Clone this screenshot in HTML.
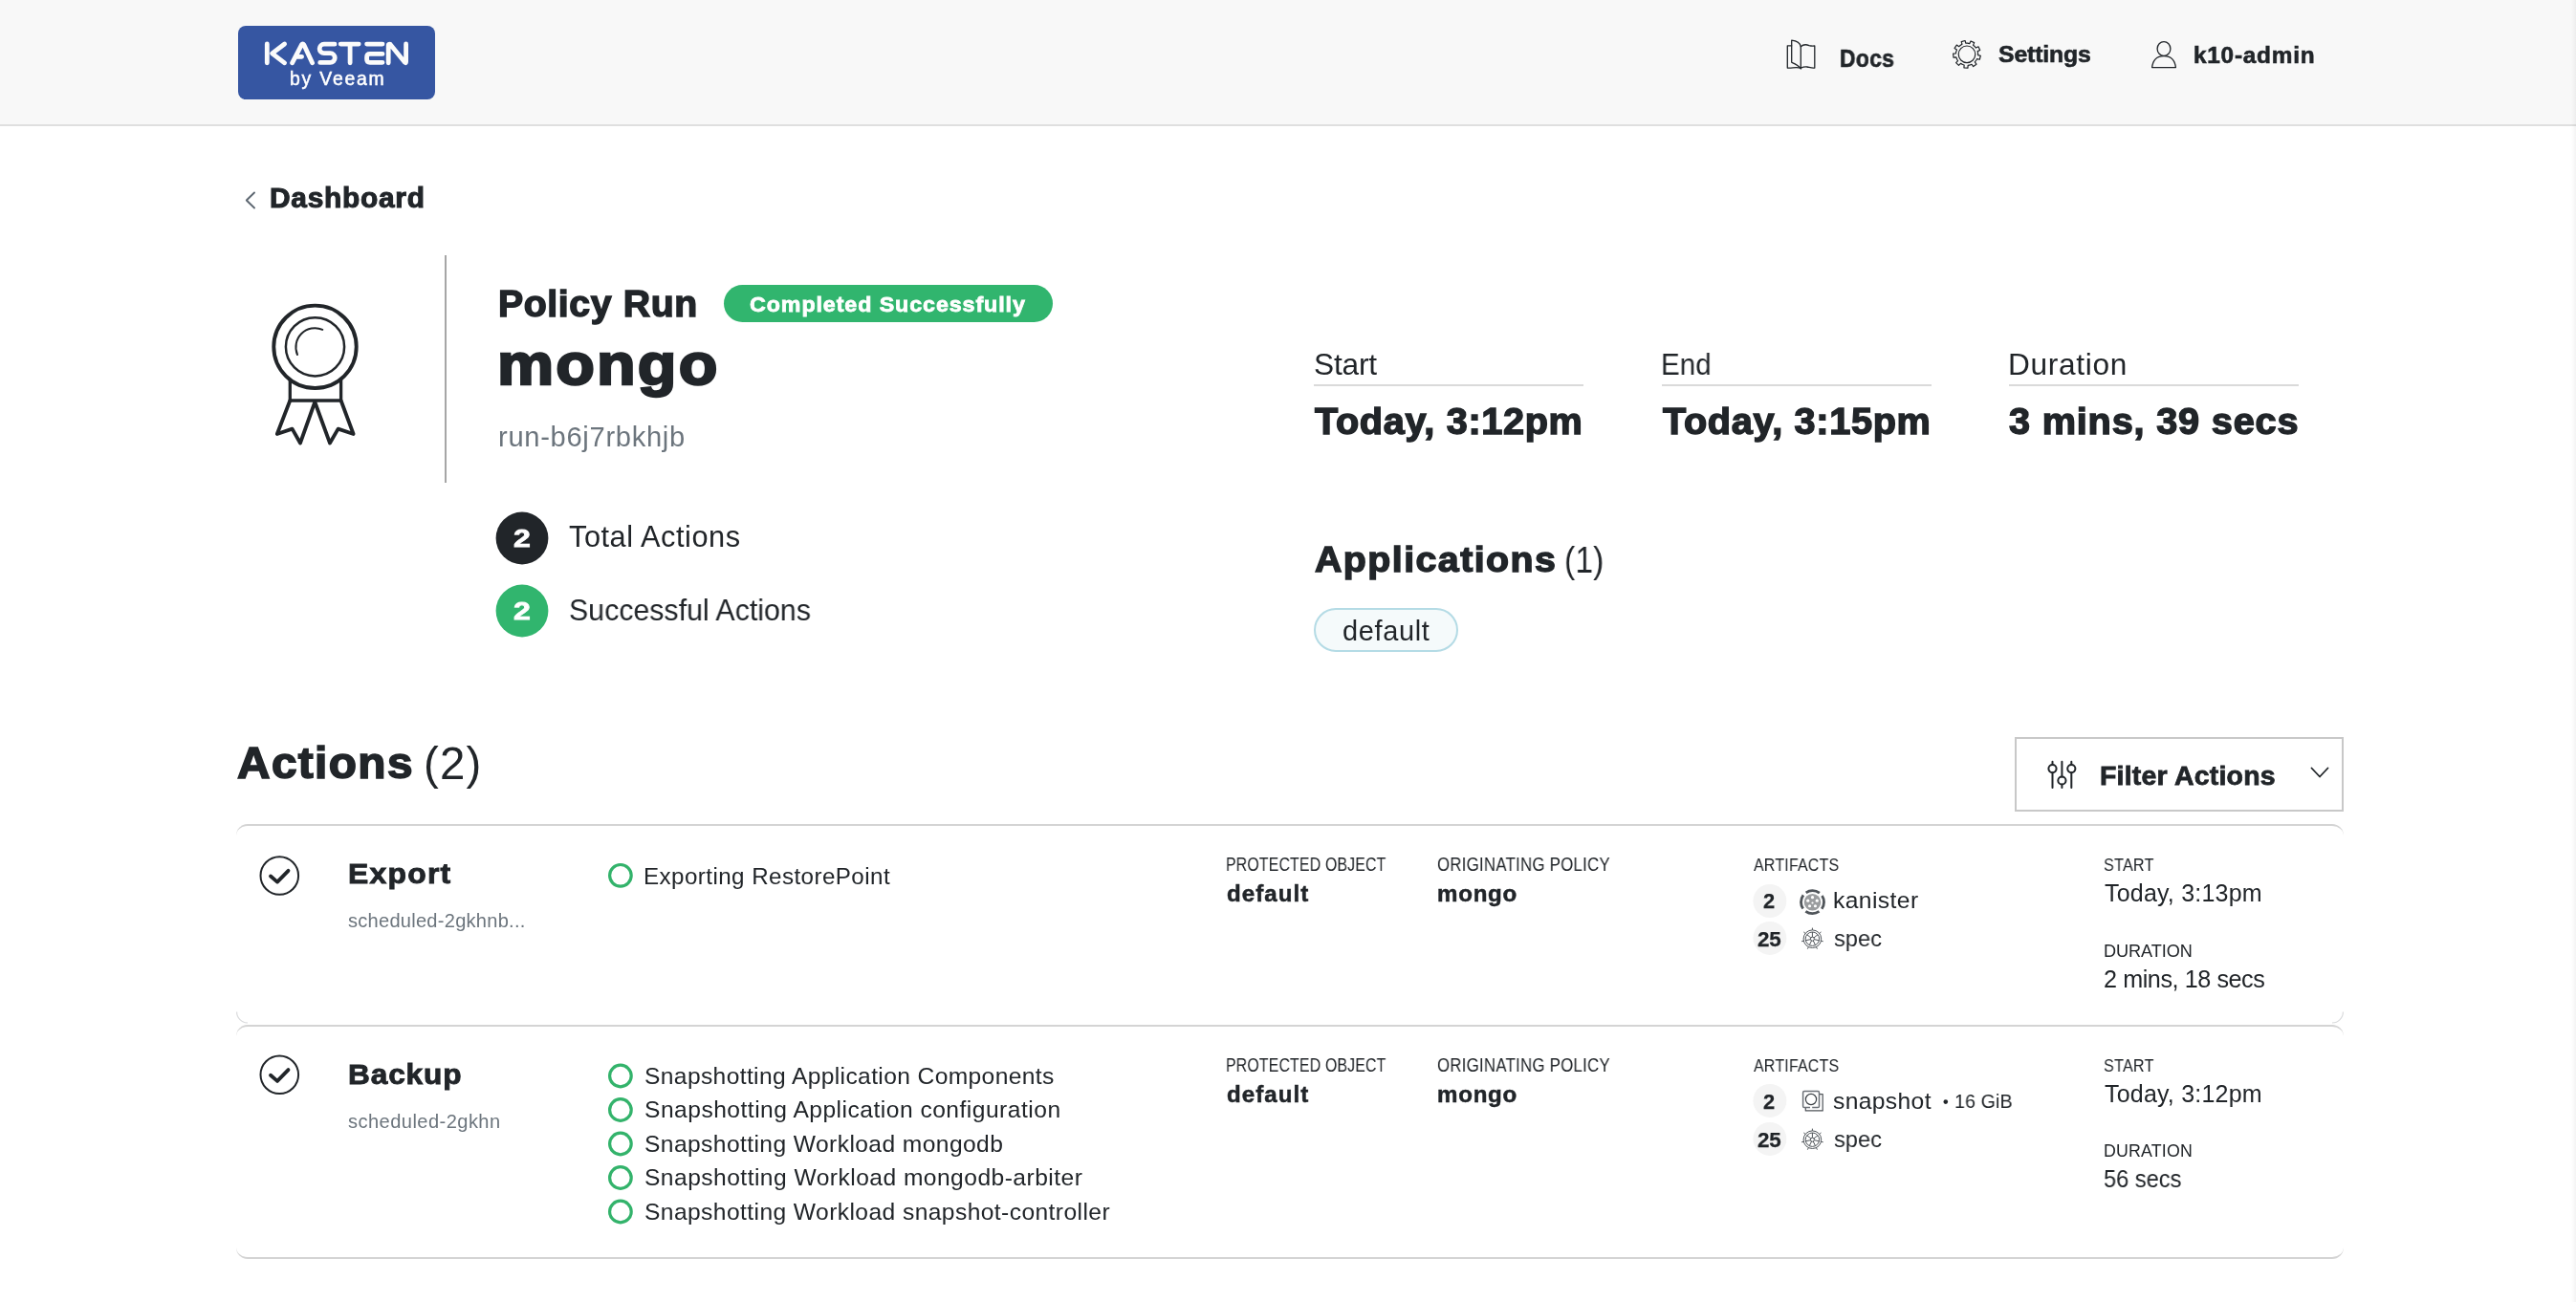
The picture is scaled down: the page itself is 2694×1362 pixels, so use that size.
<!DOCTYPE html>
<html><head><meta charset="utf-8"><title>Policy Run - mongo</title>
<style>
html,body{margin:0;padding:0;background:#fff;}
body{width:2694px;height:1362px;position:relative;overflow:hidden;font-family:"Liberation Sans",sans-serif;color:#212529;}
.t{position:absolute;white-space:nowrap;will-change:transform;}
#hdr{position:absolute;left:0;top:0;width:2694px;height:130px;background:#f8f8f8;border-bottom:2px solid #dfdfdf;}
#logo{position:absolute;left:249px;top:27px;width:206px;height:77px;background:#3656a2;border-radius:8px;}
.card{position:absolute;left:247px;width:2204px;border-top:2px solid #d4d4d4;border-radius:12px;box-sizing:border-box;}
#card1{top:862px;height:212px;}
#card2{top:1072px;height:245px;border-bottom:2px solid #d4d4d4;}
svg#ov{position:absolute;left:0;top:0;}
</style></head>
<body>
<div id="hdr"></div>
<div id="redge" style="position:absolute;right:0;top:0;width:5px;height:1362px;background:linear-gradient(to right,rgba(0,0,0,0),rgba(0,0,0,0.045));"></div>
<div id="logo"></div>
<div class="card" id="card1"></div>
<div class="card" id="card2"></div>
<svg id="ov" width="2694" height="1362" viewBox="0 0 2694 1362">
 <g id="kasten" fill="none" stroke="#fbfbfb" stroke-width="4.8" stroke-linecap="round" stroke-linejoin="round">
  <path d="M279.3 46 V65.8 M297.6 46 L284.6 55.8 L297.6 65.8"/>
  <path d="M305.6 65.8 L315.4 46.8 Q316.6 44.9 317.8 46.8 L326.6 65.8 M309.6 59.3 H315.6"/>
  <path d="M350 46.2 H338.9 A4.75 4.75 0 0 0 338.9 55.7 H345.4 A4.85 4.85 0 0 1 345.4 65.4 H334.7"/>
  <path d="M356.2 46.1 H375.2 M366.1 46.1 V65.8"/>
  <path d="M400 46.1 H383.6 M400 56.4 H386.9 Q383.6 56.4 383.6 59.7 V62 Q383.6 65.3 386.9 65.3 H400"/>
  <path d="M406.2 65.8 V47.6 Q406.2 45.8 408.2 46.4 L423.6 65.4 Q424.6 66.4 424.6 64.6 V46"/>
 </g>
 <!-- header icons -->
 <g fill="none" stroke="#212529" stroke-width="1.3" stroke-linejoin="round" stroke-linecap="round">
  <!-- book -->
  <path d="M1873.7 47.8 H1869.3 V71 C1874 71.6 1878 69.6 1883.3 71.2"/>
  <path d="M1873.7 42.2 C1878 42.6 1882.5 44.8 1883.3 48.8 V72 C1881 68 1877 66.5 1873.7 65.2 Z"/>
  <path d="M1883.3 48.8 C1886 46.2 1889 46.4 1892 47.6 C1894 48.2 1896 48.2 1897.8 48 V71 C1895 71.4 1893 70.6 1890 70 C1887 69.6 1885 70.4 1883.3 71.2"/>
  <!-- user -->
  <ellipse cx="2263" cy="51" rx="6.9" ry="7.4"/>
  <path d="M2250.6 70.6 C2251.5 62.5 2256.5 58.6 2263 58.6 C2269.5 58.6 2274.5 62.5 2275.4 70.6 Z"/>
 </g>
 <g id="gear" fill="none" stroke="#212529" stroke-width="1.2"><path d="M2049.91 47.62 L2051.97 46.35 L2051.21 43.61 L2055.07 42.53 L2055.85 45.26 L2057.47 45.21 L2059.87 45.56 L2061.04 42.98 L2064.69 44.63 L2063.54 47.22 L2064.81 48.22 L2066.42 50.03 L2068.98 48.81 L2070.72 52.42 L2068.17 53.66 L2068.50 55.25 L2068.57 57.67 L2071.31 58.38 L2070.32 62.26 L2067.57 61.57 L2066.81 63.00 L2065.30 64.90 L2066.95 67.21 L2063.69 69.55 L2062.03 67.25 L2060.53 67.85 L2058.15 68.34 L2057.93 71.17 L2053.93 70.87 L2054.13 68.04 L2052.60 67.53 L2050.46 66.38 L2048.48 68.41 L2045.61 65.61 L2047.58 63.57 L2046.73 62.19 L2045.83 59.94 L2043.01 60.21 L2042.61 56.22 L2045.43 55.93 L2045.67 54.33 L2046.43 52.03 L2044.09 50.42 L2046.35 47.11 L2048.70 48.70 Z" stroke-linejoin="round"/><circle cx="2057" cy="56.8" r="8.8"/></g>
 <!-- breadcrumb chevron -->
 <polyline points="266,201.5 257.8,209.5 266,217.5" fill="none" stroke="#5c6670" stroke-width="1.9" stroke-linecap="round" stroke-linejoin="round"/>
 <!-- award -->
 <g fill="none" stroke="#212529" stroke-linejoin="round" stroke-linecap="round">
  <circle cx="329.5" cy="362.8" r="43.2" stroke-width="3.9"/>
  <circle cx="329.5" cy="362.8" r="30.6" stroke-width="2.5"/>
  <path d="M337.3 344.8 A20 20 0 0 0 311 371" stroke-width="2"/>
  <path d="M303.3 397.5 V419 H356.6 V397.5" stroke-width="3.3"/>
  <path d="M303.3 419 L289.8 454 L305.6 448.6 L314 463.5 L329.3 420.5 L345 463.5 L353.6 448.6 L369.6 454 L356.6 419" stroke-width="3.8"/>
 </g>
 <line x1="466" y1="267" x2="466" y2="505" stroke="#a6a6a6" stroke-width="2"/>
 <!-- badge -->
 <rect x="757" y="298" width="344" height="39" rx="19.5" fill="#31b56e"/>
 <!-- counters -->
 <circle cx="546" cy="563" r="27.4" fill="#212529"/>
 <circle cx="546" cy="639" r="27.4" fill="#31b56e"/>
 <!-- time underlines -->
 <rect x="1374" y="402" width="282" height="2" fill="#dadada"/>
 <rect x="1738" y="402" width="282" height="2" fill="#dadada"/>
 <rect x="2101" y="402" width="303" height="2" fill="#dadada"/>
 <!-- pill -->
 <rect x="1375" y="637" width="149" height="44" rx="22" fill="#f5fafb" stroke="#b4dbe5" stroke-width="2"/>
 <!-- filter button -->
 <rect x="2108" y="772" width="342" height="76" fill="#fff" stroke="#c8c8c8" stroke-width="2"/>
 <g fill="none" stroke="#212529" stroke-width="2" stroke-linecap="round">
  <path d="M2146.5 796.8 V800 M2146.5 808.2 V824 M2156.4 796.8 V812.4 M2156.4 820.6 V824 M2166.3 796.8 V800 M2166.3 808.2 V824"/>
  <circle cx="2146.5" cy="804.1" r="4.1"/>
  <circle cx="2156.4" cy="816.5" r="4.1"/>
  <circle cx="2166.3" cy="804.1" r="4.1"/>
  <polyline points="2417.5,803.5 2426,812.5 2434.5,803.5" stroke-width="1.8" stroke-linejoin="round"/>
 </g>
 <!-- row check circles -->
 <g fill="none" stroke="#212529">
  <circle cx="292.3" cy="916" r="19.8" stroke-width="2"/>
  <polyline points="283,916.5 290,922.6 301.5,910.8" stroke-width="3.8" stroke-linecap="round" stroke-linejoin="round"/>
  <circle cx="292.3" cy="1124.3" r="19.8" stroke-width="2"/>
  <polyline points="283,1124.8 290,1130.9 301.5,1119.1" stroke-width="3.8" stroke-linecap="round" stroke-linejoin="round"/>
 </g>
 <!-- green step rings -->
 <g fill="none" stroke="#33b36b" stroke-width="3.2">
  <circle cx="648.9" cy="915.8" r="11.3"/>
  <circle cx="648.9" cy="1125.5" r="11.3"/>
  <circle cx="648.9" cy="1161" r="11.3"/>
  <circle cx="648.9" cy="1196.5" r="11.3"/>
  <circle cx="648.9" cy="1232" r="11.3"/>
  <circle cx="648.9" cy="1267.5" r="11.3"/>
 </g>
 <!-- count badges -->
 <g fill="#f4f4f4">
  <circle cx="1850.9" cy="942.5" r="17.5"/>
  <circle cx="1850.9" cy="981.4" r="17.5"/>
  <circle cx="1850.9" cy="1151.4" r="17.5"/>
  <circle cx="1850.9" cy="1191.4" r="17.5"/>
 </g>
<g fill="none" stroke="#cfd1d3" stroke-width="1.2" stroke-opacity="0.8">
  <path d="M247.6 1058.5 A11.5 11.5 0 0 0 259 1070"/>
  <path d="M2450.4 1058.5 A11.5 11.5 0 0 1 2439 1070"/>
 </g>
 <g id="icons"><circle cx="1895.5" cy="943.7" r="12" fill="none" stroke="#50555a" stroke-width="2.8" stroke-dasharray="15.05 3.8" stroke-dashoffset="-11.32"/>
<circle cx="1895.5" cy="943.7" r="8.8" fill="#9b9d9f"/><circle cx="1895.50" cy="938.70" r="1.6" fill="#fff"/><circle cx="1900.26" cy="942.15" r="1.6" fill="#fff"/><circle cx="1898.44" cy="947.75" r="1.6" fill="#fff"/><circle cx="1892.56" cy="947.75" r="1.6" fill="#fff"/><circle cx="1890.74" cy="942.15" r="1.6" fill="#fff"/><circle cx="1895.5" cy="944.50" r="1.1" fill="#fff"/><g fill="none" stroke="#50555a" stroke-width="1"><circle cx="1895.4" cy="982.2" r="9.3"/><circle cx="1895.4" cy="982.2" r="7.2"/><circle cx="1895.4" cy="982.2" r="2"/><path d="M1895.40 980.20 L1895.40 975.00 M1895.40 972.90 L1895.40 970.60 M1896.96 980.95 L1901.03 977.71 M1902.67 976.40 L1904.47 974.97 M1897.35 982.65 L1902.42 983.80 M1904.47 984.27 L1906.71 984.78 M1896.27 984.00 L1898.52 988.69 M1899.44 990.58 L1900.43 992.65 M1894.53 984.00 L1892.28 988.69 M1891.36 990.58 L1890.37 992.65 M1893.45 982.65 L1888.38 983.80 M1886.33 984.27 L1884.09 984.78 M1893.84 980.95 L1889.77 977.71 M1888.13 976.40 L1886.33 974.97 "/></g><g fill="none" stroke="#50555a" stroke-width="1"><circle cx="1895.4" cy="1192.2" r="9.3"/><circle cx="1895.4" cy="1192.2" r="7.2"/><circle cx="1895.4" cy="1192.2" r="2"/><path d="M1895.40 1190.20 L1895.40 1185.00 M1895.40 1182.90 L1895.40 1180.60 M1896.96 1190.95 L1901.03 1187.71 M1902.67 1186.40 L1904.47 1184.97 M1897.35 1192.65 L1902.42 1193.80 M1904.47 1194.27 L1906.71 1194.78 M1896.27 1194.00 L1898.52 1198.69 M1899.44 1200.58 L1900.43 1202.65 M1894.53 1194.00 L1892.28 1198.69 M1891.36 1200.58 L1890.37 1202.65 M1893.45 1192.65 L1888.38 1193.80 M1886.33 1194.27 L1884.09 1194.78 M1893.84 1190.95 L1889.77 1187.71 M1888.13 1186.40 L1886.33 1184.97 "/></g><g fill="none" stroke-linejoin="round">
<path d="M1893 1158.6 H1887 Q1885.6 1158.6 1885.6 1157.2 V1142.9 Q1885.6 1141.5 1887 1141.5 H1901.1 Q1902.5 1141.5 1902.5 1142.9 V1157.2 Q1902.5 1158.6 1901.1 1158.6 H1895.2" stroke="#6c7177" stroke-width="1.5"/>
<path d="M1903 1144.6 H1906.2 V1161.9 H1888.3 V1159" stroke="#50555a" stroke-width="1.2"/>
<circle cx="1894" cy="1150" r="5.6" stroke="#3a3f44" stroke-width="1.2"/>
</g></g>
 <circle cx="2034.8" cy="1152.6" r="2.3" fill="#212529"/>
</svg>
<header class="nav-bar">
<div class="t" id="byveeam" style="left:302.54px;top:73.40px;font-size:19.40px;line-height:19.40px;letter-spacing:1.789px;font-weight:400;color:#fff;-webkit-text-stroke:0.50px #fff">by Veeam</div>
<div class="t" id="docs" style="left:1923.85px;top:48.75px;font-size:25.10px;line-height:25.10px;letter-spacing:0.348px;font-weight:700;color:#212529;-webkit-text-stroke:0.60px #212529;transform:scaleX(0.91);transform-origin:0 0">Docs</div>
<div class="t" id="settings" style="left:2089.91px;top:45.43px;font-size:24.75px;line-height:24.75px;letter-spacing:-0.119px;font-weight:700;color:#212529;-webkit-text-stroke:0.60px #212529">Settings</div>
<div class="t" id="admin" style="left:2294.28px;top:45.61px;font-size:24.37px;line-height:24.37px;letter-spacing:0.755px;font-weight:700;color:#212529;-webkit-text-stroke:0.60px #212529">k10-admin</div>
</header>
<nav class="breadcrumb">
<div class="t" id="dash" style="left:282.40px;top:192.99px;font-size:29.01px;line-height:29.01px;letter-spacing:0.717px;font-weight:700;color:#212529;-webkit-text-stroke:1.00px #212529;transform:scaleX(1.03);transform-origin:0 0">Dashboard</div>
</nav>
<section class="run-summary">
<div class="t" id="policyrun" style="left:520.97px;top:299.24px;font-size:38.12px;line-height:38.12px;letter-spacing:0.576px;font-weight:700;color:#212529;-webkit-text-stroke:1.40px #212529;transform:scaleX(1.03);transform-origin:0 0">Policy Run</div>
<div class="t" id="badge" style="left:784.49px;top:307.54px;font-size:22.33px;line-height:22.33px;letter-spacing:0.889px;font-weight:700;color:#fff;-webkit-text-stroke:0.80px #fff;transform:scaleX(1.04);transform-origin:0 0">Completed Successfully</div>
<div class="t" id="mongo" style="left:520.14px;top:350.19px;font-size:61.62px;line-height:61.62px;letter-spacing:1.981px;font-weight:700;color:#212529;-webkit-text-stroke:2.40px #212529;transform:scaleX(1.08);transform-origin:0 0">mongo</div>
<div class="t" id="runid" style="left:520.88px;top:443.43px;font-size:29.14px;line-height:29.14px;letter-spacing:0.694px;font-weight:400;color:#6c757d">run-b6j7rbkhjb</div>
<div class="t" id="tot2" style="left:536.98px;top:550.34px;font-size:26.31px;line-height:26.31px;letter-spacing:0.000px;font-weight:700;color:#fff;-webkit-text-stroke:0.80px #fff;transform:scaleX(1.22);transform-origin:0 0">2</div>
<div class="t" id="total" style="left:595.02px;top:546.74px;font-size:30.72px;line-height:30.72px;letter-spacing:0.548px;font-weight:400;color:#212529">Total Actions</div>
<div class="t" id="suc2" style="left:536.98px;top:626.34px;font-size:26.31px;line-height:26.31px;letter-spacing:0.000px;font-weight:700;color:#fff;-webkit-text-stroke:0.80px #fff;transform:scaleX(1.22);transform-origin:0 0">2</div>
<div class="t" id="succ" style="left:594.55px;top:623.01px;font-size:31.57px;line-height:31.57px;letter-spacing:0.019px;font-weight:400;color:#212529;transform:scaleX(0.96);transform-origin:0 0">Successful Actions</div>
</section>
<section class="run-times">
<div class="t" id="start" style="left:1373.76px;top:366.03px;font-size:31.64px;line-height:31.64px;letter-spacing:-0.174px;font-weight:400;color:#212529">Start</div>
<div class="t" id="startv" style="left:1375.47px;top:422.13px;font-size:38.54px;line-height:38.54px;letter-spacing:0.640px;font-weight:700;color:#212529;-webkit-text-stroke:1.40px #212529;transform:scaleX(1.03);transform-origin:0 0">Today, 3:12pm</div>
<div class="t" id="end" style="left:1737.45px;top:366.03px;font-size:31.64px;line-height:31.64px;letter-spacing:0.182px;font-weight:400;color:#212529;transform:scaleX(0.93);transform-origin:0 0">End</div>
<div class="t" id="endv" style="left:1738.72px;top:422.13px;font-size:38.54px;line-height:38.54px;letter-spacing:0.632px;font-weight:700;color:#212529;-webkit-text-stroke:1.40px #212529;transform:scaleX(1.03);transform-origin:0 0">Today, 3:15pm</div>
<div class="t" id="dur" style="left:2099.78px;top:366.03px;font-size:31.64px;line-height:31.64px;letter-spacing:0.699px;font-weight:400;color:#212529">Duration</div>
<div class="t" id="durv" style="left:2101.35px;top:422.13px;font-size:38.54px;line-height:38.54px;letter-spacing:0.778px;font-weight:700;color:#212529;-webkit-text-stroke:1.40px #212529;transform:scaleX(1.03);transform-origin:0 0">3 mins, 39 secs</div>
</section>
<section class="run-apps">
<div class="t" id="apps" style="left:1374.52px;top:566.91px;font-size:37.48px;line-height:37.48px;letter-spacing:1.370px;font-weight:700;color:#212529;-webkit-text-stroke:1.40px #212529;transform:scaleX(1.05);transform-origin:0 0">Applications</div>
<div class="t" id="apps1" style="left:1636.42px;top:566.29px;font-size:39.11px;line-height:39.11px;letter-spacing:0.122px;font-weight:400;color:#212529;transform:scaleX(0.86);transform-origin:0 0">(1)</div>
<div class="t" id="pill" style="left:1404.10px;top:646.13px;font-size:28.94px;line-height:28.94px;letter-spacing:0.654px;font-weight:400;color:#212529">default</div>
</section>
<div class="actions-head">
<div class="t" id="actions" style="left:247.59px;top:776.14px;font-size:45.51px;line-height:45.51px;letter-spacing:1.313px;font-weight:700;color:#212529;-webkit-text-stroke:1.60px #212529;transform:scaleX(1.05);transform-origin:0 0">Actions</div>
<div class="t" id="actions2" style="left:442.78px;top:774.98px;font-size:47.43px;line-height:47.43px;letter-spacing:1.155px;font-weight:400;color:#212529">(2)</div>
<div class="t" id="filter" style="left:2196.02px;top:797.48px;font-size:28.44px;line-height:28.44px;letter-spacing:0.229px;font-weight:700;color:#212529;-webkit-text-stroke:0.80px #212529">Filter Actions</div>
</div>
<article class="action-export">
<div class="t" id="export" style="left:364.48px;top:899.22px;font-size:30.36px;line-height:30.36px;letter-spacing:1.187px;font-weight:700;color:#212529;-webkit-text-stroke:0.90px #212529;transform:scaleX(1.05);transform-origin:0 0">Export</div>
<div class="t" id="sched1" style="left:364.44px;top:953.31px;font-size:20.09px;line-height:20.09px;letter-spacing:0.249px;font-weight:400;color:#6c757d">scheduled-2gkhnb...</div>
<div class="t" id="exp1" style="left:672.86px;top:904.76px;font-size:24.18px;line-height:24.18px;letter-spacing:0.430px;font-weight:400;color:#212529">Exporting RestorePoint</div>
<div class="t" id="po1" style="left:1282.16px;top:895.33px;font-size:19.34px;line-height:19.34px;letter-spacing:0.213px;font-weight:400;color:#212529;transform:scaleX(0.82);transform-origin:0 0">PROTECTED OBJECT</div>
<div class="t" id="pov1" style="left:1282.90px;top:922.80px;font-size:24.10px;line-height:24.10px;letter-spacing:1.045px;font-weight:700;color:#212529;-webkit-text-stroke:0.50px #212529">default</div>
<div class="t" id="op1" style="left:1503.21px;top:895.33px;font-size:19.34px;line-height:19.34px;letter-spacing:0.295px;font-weight:400;color:#212529;transform:scaleX(0.87);transform-origin:0 0">ORIGINATING POLICY</div>
<div class="t" id="opv1" style="left:1502.74px;top:922.80px;font-size:24.10px;line-height:24.10px;letter-spacing:0.744px;font-weight:700;color:#212529;-webkit-text-stroke:0.50px #212529">mongo</div>
<div class="t" id="art1" style="left:1833.75px;top:895.76px;font-size:18.49px;line-height:18.49px;letter-spacing:0.290px;font-weight:400;color:#212529;transform:scaleX(0.86);transform-origin:0 0">ARTIFACTS</div>
<div class="t" id="c2a" style="left:1844.44px;top:932.06px;font-size:21.83px;line-height:21.83px;letter-spacing:0.000px;font-weight:700;color:#212529;-webkit-text-stroke:0.25px #212529">2</div>
<div class="t" id="c25a" style="left:1838.42px;top:971.77px;font-size:22.40px;line-height:22.40px;letter-spacing:-0.158px;font-weight:700;color:#212529;-webkit-text-stroke:0.25px #212529">25</div>
<div class="t" id="kan" style="left:1917.21px;top:929.78px;font-size:24.65px;line-height:24.65px;letter-spacing:0.409px;font-weight:400;color:#212529">kanister</div>
<div class="t" id="spec1" style="left:1918.38px;top:969.78px;font-size:24.65px;line-height:24.65px;letter-spacing:0.004px;font-weight:400;color:#212529;transform:scaleX(0.96);transform-origin:0 0">spec</div>
<div class="t" id="st1" style="left:2200.40px;top:895.86px;font-size:18.49px;line-height:18.49px;letter-spacing:0.327px;font-weight:400;color:#212529;transform:scaleX(0.87);transform-origin:0 0">START</div>
<div class="t" id="stv1" style="left:2200.61px;top:922.38px;font-size:25.03px;line-height:25.03px;letter-spacing:0.196px;font-weight:400;color:#212529">Today, 3:13pm</div>
<div class="t" id="du1" style="left:2199.58px;top:986.28px;font-size:18.13px;line-height:18.13px;letter-spacing:-0.065px;font-weight:400;color:#212529">DURATION</div>
<div class="t" id="duv1" style="left:2199.82px;top:1011.71px;font-size:25.17px;line-height:25.17px;letter-spacing:-0.423px;font-weight:400;color:#212529">2 mins, 18 secs</div>
</article>
<article class="action-backup">
<div class="t" id="backup" style="left:364.49px;top:1109.22px;font-size:30.36px;line-height:30.36px;letter-spacing:0.865px;font-weight:700;color:#212529;-webkit-text-stroke:0.90px #212529;transform:scaleX(1.04);transform-origin:0 0">Backup</div>
<div class="t" id="sched2" style="left:364.44px;top:1162.56px;font-size:20.09px;line-height:20.09px;letter-spacing:0.444px;font-weight:400;color:#6c757d">scheduled-2gkhn</div>
<div class="t" id="s1" style="left:673.98px;top:1113.70px;font-size:24.60px;line-height:24.60px;letter-spacing:0.372px;font-weight:400;color:#212529">Snapshotting Application Components</div>
<div class="t" id="s2" style="left:673.98px;top:1149.20px;font-size:24.60px;line-height:24.60px;letter-spacing:0.488px;font-weight:400;color:#212529">Snapshotting Application configuration</div>
<div class="t" id="s3" style="left:673.98px;top:1184.70px;font-size:24.60px;line-height:24.60px;letter-spacing:0.415px;font-weight:400;color:#212529">Snapshotting Workload mongodb</div>
<div class="t" id="s4" style="left:673.98px;top:1220.20px;font-size:24.60px;line-height:24.60px;letter-spacing:0.464px;font-weight:400;color:#212529">Snapshotting Workload mongodb-arbiter</div>
<div class="t" id="s5" style="left:673.98px;top:1255.70px;font-size:24.60px;line-height:24.60px;letter-spacing:0.420px;font-weight:400;color:#212529">Snapshotting Workload snapshot-controller</div>
<div class="t" id="po2" style="left:1282.16px;top:1105.33px;font-size:19.34px;line-height:19.34px;letter-spacing:0.213px;font-weight:400;color:#212529;transform:scaleX(0.82);transform-origin:0 0">PROTECTED OBJECT</div>
<div class="t" id="pov2" style="left:1282.90px;top:1132.80px;font-size:24.10px;line-height:24.10px;letter-spacing:1.045px;font-weight:700;color:#212529;-webkit-text-stroke:0.50px #212529">default</div>
<div class="t" id="op2" style="left:1503.21px;top:1105.33px;font-size:19.34px;line-height:19.34px;letter-spacing:0.295px;font-weight:400;color:#212529;transform:scaleX(0.87);transform-origin:0 0">ORIGINATING POLICY</div>
<div class="t" id="opv2" style="left:1502.74px;top:1132.80px;font-size:24.10px;line-height:24.10px;letter-spacing:0.744px;font-weight:700;color:#212529;-webkit-text-stroke:0.50px #212529">mongo</div>
<div class="t" id="art2" style="left:1833.75px;top:1105.76px;font-size:18.49px;line-height:18.49px;letter-spacing:0.290px;font-weight:400;color:#212529;transform:scaleX(0.86);transform-origin:0 0">ARTIFACTS</div>
<div class="t" id="c2b" style="left:1844.44px;top:1142.06px;font-size:21.83px;line-height:21.83px;letter-spacing:0.000px;font-weight:700;color:#212529;-webkit-text-stroke:0.25px #212529">2</div>
<div class="t" id="c25b" style="left:1838.42px;top:1181.77px;font-size:22.40px;line-height:22.40px;letter-spacing:-0.158px;font-weight:700;color:#212529;-webkit-text-stroke:0.25px #212529">25</div>
<div class="t" id="snap" style="left:1917.36px;top:1139.78px;font-size:24.65px;line-height:24.65px;letter-spacing:0.360px;font-weight:400;color:#212529">snapshot</div>
<div class="t" id="gib" style="left:2043.77px;top:1141.86px;font-size:20.48px;line-height:20.48px;letter-spacing:0.093px;font-weight:400;color:#212529;transform:scaleX(0.96);transform-origin:0 0">16 GiB</div>
<div class="t" id="spec2" style="left:1918.38px;top:1179.78px;font-size:24.65px;line-height:24.65px;letter-spacing:0.004px;font-weight:400;color:#212529;transform:scaleX(0.96);transform-origin:0 0">spec</div>
<div class="t" id="st2" style="left:2200.40px;top:1105.86px;font-size:18.49px;line-height:18.49px;letter-spacing:0.327px;font-weight:400;color:#212529;transform:scaleX(0.87);transform-origin:0 0">START</div>
<div class="t" id="stv2" style="left:2200.61px;top:1132.38px;font-size:25.03px;line-height:25.03px;letter-spacing:0.196px;font-weight:400;color:#212529">Today, 3:12pm</div>
<div class="t" id="du2" style="left:2199.61px;top:1195.51px;font-size:17.78px;line-height:17.78px;letter-spacing:0.188px;font-weight:400;color:#212529">DURATION</div>
<div class="t" id="duv2" style="left:2200.26px;top:1221.16px;font-size:24.89px;line-height:24.89px;letter-spacing:-0.001px;font-weight:400;color:#212529;transform:scaleX(0.95);transform-origin:0 0">56 secs</div>
</article>
</body></html>
